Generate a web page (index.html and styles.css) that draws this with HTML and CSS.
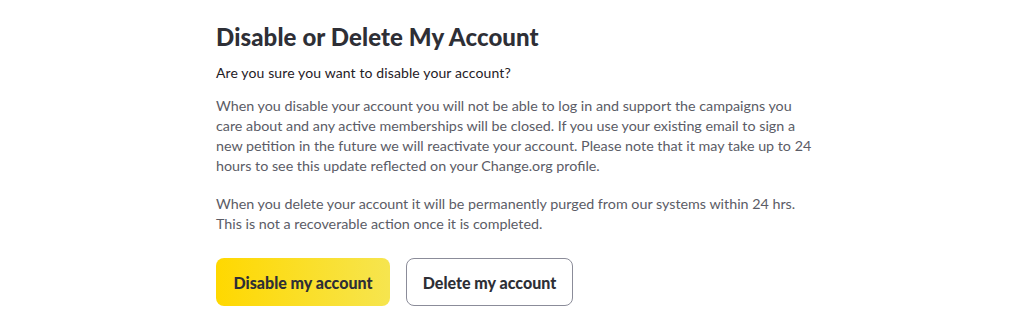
FILE: index.html
```html
<!DOCTYPE html>
<html>
<head>
<meta charset="utf-8">
<link rel="stylesheet" href="styles.css">
</head>
<body>
<main class="page">
  <h1 class="title">Disable or Delete My Account</h1>
  <p class="question">Are you sure you want to disable your account?</p>
  <p class="info">When you disable your account you will not be able to log in and support the campaigns you care about and any active memberships will be closed. If you use your existing email to sign a new petition in the future we will reactivate your account. Please note that it may take up to 24 hours to see this update reflected on your Change.org profile.</p>
  <p class="info">When you delete your account it will be permanently purged from our systems within 24 hrs. This is not a recoverable action once it is completed.</p>
  <div class="actions">
    <button class="btn btn-primary">Disable my account</button>
    <button class="btn btn-secondary">Delete my account</button>
  </div>
</main>
</body>
</html>
```
FILE: styles.css
```css
html, body {
  margin: 0;
  padding: 0;
  background: #ffffff;
}
body {
  font-family: Lato, "Noto Sans", sans-serif;
  color: #2e2f36;
}
.page {
  width: 600px;
  margin-left: 216px;
  padding-top: 21px;
}
.title {
  margin: 0;
  font-size: 24px;
  line-height: 32px;
  font-weight: 900;
  letter-spacing: 0.1px;
  color: #2e2f36;
}
.question {
  margin: 10px 0 0;
  font-size: 14px;
  line-height: 20px;
  letter-spacing: 0.12px;
  color: #1f2026;
}
.info {
  margin: 13px 0 0;
  font-size: 14.3px;
  line-height: 20px;
  color: #5b5c66;
}
.info + .info {
  margin-top: 18px;
}
.actions {
  display: flex;
  gap: 16px;
  margin-top: 24px;
}
.btn {
  height: 48px;
  border-radius: 8px;
  font-family: Lato, "Noto Sans", sans-serif;
  font-size: 16px;
  font-weight: 900;
  color: #2e2f36;
  padding: 0;
  white-space: nowrap;
  cursor: pointer;
}
.btn-primary {
  width: 174px;
  border: none;
  background: linear-gradient(90deg, #ffd800 0%, #f6e54f 100%);
}
.btn-secondary {
  width: 167px;
  border: 1px solid #8b8c99;
  background: #ffffff;
}
```
